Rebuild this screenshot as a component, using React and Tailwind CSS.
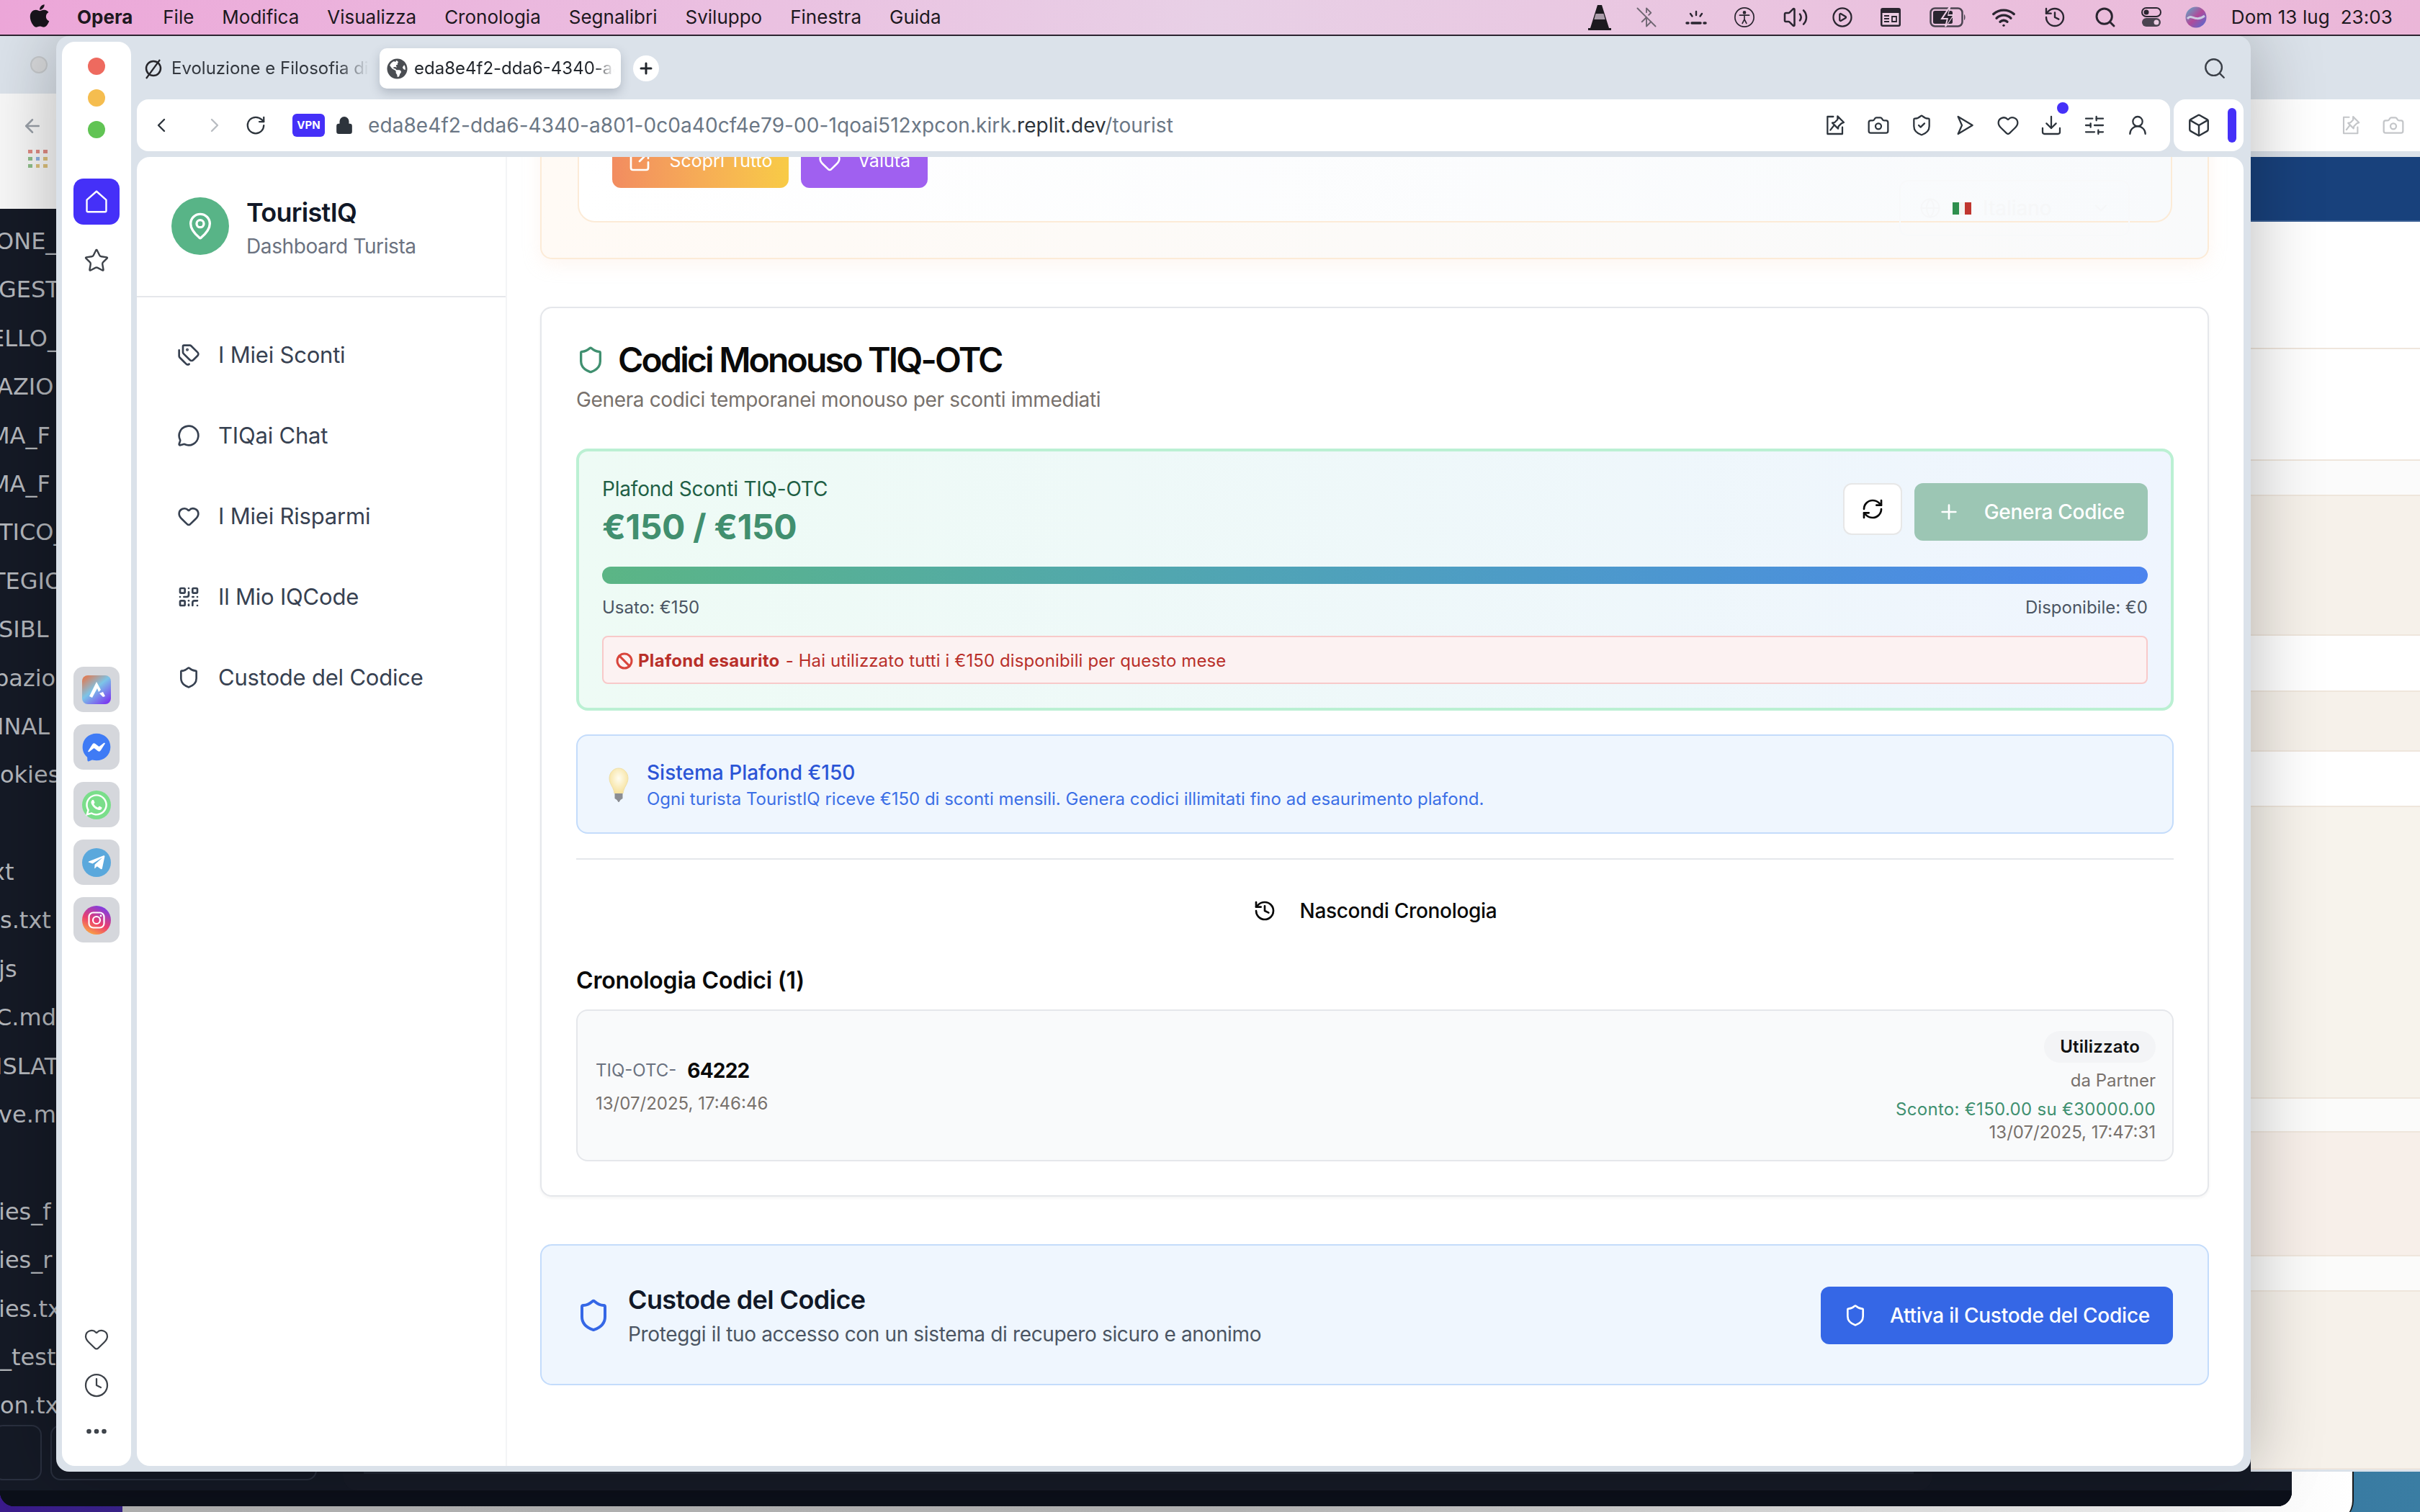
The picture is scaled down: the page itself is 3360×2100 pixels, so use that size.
import React from 'react';
import {
  Tags, MessageCircle, Heart, QrCode, Shield, MapPin, SquareArrowOutUpRight, RefreshCw, Plus, History, Globe,
  ChevronDown, ChevronLeft, ChevronRight, RotateCw, Lock, Search, Camera, ShieldCheck, Download, SlidersHorizontal,
  UserRound, Box, Star, Clock, Ellipsis, ArrowLeft, BluetoothOff, Volume2, CirclePlay, Wifi, Ban,
} from 'lucide-react';
import { FaApple, FaFacebookMessenger, FaWhatsapp, FaTelegramPlane, FaGlobeAmericas } from 'react-icons/fa';

const menuItems = ['File', 'Modifica', 'Visualizza', 'Cronologia', 'Segnalibri', 'Sviluppo', 'Finestra', 'Guida'];

const navItems = [
  { label: 'I Miei Sconti', icon: Tags },
  { label: 'TIQai Chat', icon: MessageCircle },
  { label: 'I Miei Risparmi', icon: Heart },
  { label: 'Il Mio IQCode', icon: QrCode },
  { label: 'Custode del Codice', icon: Shield },
];

// the terminal behind the browser, each row cut by the left edge of the screen
const terminalRows = [
  { t: 'ONE_', c: '-ml-[6px]' },
  { t: 'GEST', c: '-ml-[2px]' },
  { t: 'ELLO_', c: '-ml-[14px]' },
  { t: 'AZIO', c: '-ml-[4px]' },
  { t: 'MA_F', c: '-ml-[14px]' },
  { t: 'MA_F', c: '-ml-[14px]' },
  { t: 'TICO_', c: '-ml-[2px]' },
  { t: 'TEGIO', c: '-ml-[12px]' },
  { t: 'SIBL', c: '-ml-[2px]' },
  { t: 'pazio', c: '-ml-[8px]' },
  { t: 'INAL', c: '-ml-[4px]' },
  { t: 'okies', c: 'ml-0' },
  { t: '\u00a0', c: 'ml-0' },
  { t: 'xt', c: '-ml-[12px]' },
  { t: 's.txt', c: 'ml-0' },
  { t: 'js', c: '-ml-[2px]' },
  { t: 'C.md', c: '-ml-[6px]' },
  { t: 'ISLAT', c: '-ml-[6px]' },
  { t: 've.md', c: '-ml-[2px]' },
  { t: '\u00a0', c: 'ml-0' },
  { t: 'ies_f', c: '-ml-[2px]' },
  { t: 'ies_r', c: '-ml-[2px]' },
  { t: 'ies.tx', c: '-ml-[2px]' },
  { t: '_test', c: 'ml-0' },
  { t: 'on.tx', c: 'ml-0' },
];

const rightStripes = [
  { h: 'h-[177px]', c: 'bg-white' },
  { h: 'h-[155px]', c: 'bg-white' },
  { h: 'h-[49px]', c: 'bg-[#fbfbfb]' },
  { h: 'h-[194px]', c: 'bg-[#f6f1ea]' },
  { h: 'h-[78px]', c: 'bg-white' },
  { h: 'h-[83px]', c: 'bg-[#f6f1ea]' },
  { h: 'h-[77px]', c: 'bg-white' },
  { h: 'h-[405px]', c: 'bg-[#f7f3ec]' },
  { h: 'h-[47px]', c: 'bg-[#fbfbfa]' },
  { h: 'h-[172px]', c: 'bg-[#f7efe9]' },
  { h: 'h-[49px]', c: 'bg-[#fbfbfa]' },
  { h: 'h-[247px]', c: 'bg-[#f6f1ea]' },
];

// toolbar glyphs that are not in the icon packs
const PinBox = ({ className }) => (
  <svg viewBox="0 0 24 24" fill="none" stroke="currentColor" strokeWidth="1.7" strokeLinecap="round" strokeLinejoin="round" className={className}>
    <path d="M10 3H4v18h15.500v-7" />
    <path d="M14.500 2.500l6.500 6.500-2.500 1-3 3-.5 2.500-6-6 2.500-.5 3-3z" />
    <path d="M10.500 12.500L7 17" />
  </svg>
);

const FlowArrow = ({ className }) => (
  <svg viewBox="0 0 24 24" fill="none" stroke="currentColor" strokeWidth="1.7" strokeLinejoin="round" className={className}>
    <path d="M5 3l15 9-15 9 4-9z" />
  </svg>
);

const HomeShape = ({ className }) => (
  <svg viewBox="0 0 24 24" fill="none" stroke="currentColor" strokeWidth="1.500" strokeLinejoin="round" className={className}>
    <path d="M3.500 10.500L12 3l8.500 7.500V20a1 1 0 0 1-1 1h-15a1 1 0 0 1-1-1z" />
  </svg>
);

const Cone = ({ className }) => (
  <svg viewBox="0 0 32 36" className={className}>
    <path d="M13 1h6l10 32h3v3H0v-3h3z" fill="#1c1a1f" />
    <path d="M10.500 13h11l2.200 8H8.300z" fill="#a99aa8" />
  </svg>
);

const Brightness = ({ className }) => (
  <svg viewBox="0 0 32 32" fill="none" stroke="#2a2530" strokeWidth="2.400" strokeLinecap="round" className={className}>
    <path d="M16 8v5M8 11l2.500 3.500M24 11l-2.500 3.500" />
    <path d="M3 24h2M10 24h12M27 24h2" strokeWidth="3.500" />
  </svg>
);

const Accessibility = ({ className }) => (
  <svg viewBox="0 0 32 32" fill="none" stroke="#2a2530" strokeWidth="1.800" strokeLinecap="round" className={className}>
    <circle cx="16" cy="16" r="14" />
    <circle cx="16" cy="9" r="1.600" fill="#2a2530" />
    <path d="M9 13h14M16 13v6M16 19l-3 6M16 19l3 6" />
  </svg>
);

const KeyWindow = ({ className }) => (
  <svg viewBox="0 0 32 32" className={className}>
    <rect x="2" y="3" width="28" height="26" rx="3" fill="#2a2530" />
    <rect x="4.500" y="10" width="23" height="16.500" fill="#eccde3" />
    <path d="M7 14h7M7 18h7M7 22h7M18 15h6v7h-6z" stroke="#2a2530" strokeWidth="1.800" fill="none" />
  </svg>
);

const BatteryBolt = ({ className }) => (
  <svg viewBox="0 0 52 28" className={className}>
    <rect x="1.500" y="1.500" width="44" height="25" rx="6" fill="none" stroke="#4a4350" strokeWidth="2.500" />
    <rect x="5" y="5" width="27" height="18" rx="2.500" fill="#2a2530" />
    <path d="M48 10c2 1 2 7 0 8z" fill="#4a4350" />
    <path d="M27 1L17 16h8l-3 11 11-16h-8l3-10z" fill="#eccde3" stroke="#eccde3" strokeWidth="2" />
    <path d="M27 3l-8 12h7l-2 9 8-12h-7z" fill="#2a2530" />
  </svg>
);

const ControlCenter = ({ className }) => (
  <svg viewBox="0 0 32 32" className={className}>
    <rect x="3" y="3" width="26" height="12" rx="6" fill="none" stroke="#2a2530" strokeWidth="2" />
    <circle cx="9" cy="9" r="3.500" fill="#2a2530" />
    <rect x="3" y="17" width="26" height="12" rx="6" fill="#4a4350" />
    <circle cx="23" cy="23" r="3.500" fill="#eccde3" />
  </svg>
);

const Siri = ({ className }) => (
  <svg viewBox="0 0 32 32" className={className}>
    <defs>
      <linearGradient id="siriA" x1="0" y1="0" x2="1" y2="1">
        <stop offset="0" stopColor="#5ab0c8" />
        <stop offset="0.5" stopColor="#b04a9a" />
        <stop offset="1" stopColor="#4a6fd8" />
      </linearGradient>
    </defs>
    <circle cx="16" cy="16" r="14.500" fill="url(#siriA)" />
    <path d="M4 18c6-8 10 6 24-4" stroke="#d8e8f0" strokeWidth="3" fill="none" opacity="0.8" />
  </svg>
);

const AriaLogo = () => (
  <svg viewBox="0 0 40 40" className="w-[40px] h-[40px]">
    <defs>
      <linearGradient id="ariaBg" x1="0" y1="0" x2="0.8" y2="1">
        <stop offset="0" stopColor="#f0703c" />
        <stop offset="0.5" stopColor="#7cc4e8" />
        <stop offset="1" stopColor="#7a3cf0" />
      </linearGradient>
    </defs>
    <rect width="40" height="40" rx="8" fill="url(#ariaBg)" />
    <path d="M20 9l6 11-3 3-2-5-7 13-4-2z" fill="#fff" />
    <path d="M24 25l5-2 3 6-3 1z" fill="#fff" />
  </svg>
);

const InstagramLogo = () => (
  <svg viewBox="0 0 40 40" className="w-[40px] h-[40px]">
    <defs>
      <linearGradient id="igBg" x1="0.2" y1="1" x2="0.7" y2="0">
        <stop offset="0" stopColor="#fbb040" />
        <stop offset="0.45" stopColor="#ec3f6c" />
        <stop offset="1" stopColor="#7b3ce8" />
      </linearGradient>
    </defs>
    <circle cx="20" cy="20" r="20" fill="url(#igBg)" />
    <rect x="9.500" y="9.500" width="21" height="21" rx="6" fill="none" stroke="#fff" strokeWidth="2.200" />
    <circle cx="20" cy="20" r="5" fill="none" stroke="#fff" strokeWidth="2.200" />
    <circle cx="26" cy="14" r="1.400" fill="#fff" />
  </svg>
);

const Bulb = () => (
  <svg viewBox="0 0 28 48" className="w-[28px] h-[48px]">
    <defs>
      <radialGradient id="bulbFill" cx="0.5" cy="0.4" r="0.7">
        <stop offset="0" stopColor="#fffdf0" />
        <stop offset="1" stopColor="#f5dc8c" />
      </radialGradient>
    </defs>
    <path d="M14 1C6 1 1 8 1 15c0 8 6 12 7 21h12c1-9 7-13 7-21C27 8 22 1 14 1z" fill="url(#bulbFill)" stroke="#efe0a8" />
    <path d="M8.500 36h11v7l-3 2-2 3h-1l-2-3-3-2z" fill="#8b8d92" />
  </svg>
);

const TabSlash = () => (
  <svg viewBox="0 0 30 30" fill="none" stroke="#26262b" className="w-[30px] h-[30px] shrink-0">
    <circle cx="15" cy="15" r="10" strokeWidth="2.500" />
    <path d="M24 3L5 29" strokeWidth="2.200" />
  </svg>
);

const ItalyFlag = () => (
  <span className="flex w-[26px] h-[17px] overflow-hidden">
    <span className="flex-1 bg-[#2f8f4e]" />
    <span className="flex-1 bg-[#f4f4f0]" />
    <span className="flex-1 bg-[#c0362f]" />
  </span>
);

const MenuBar = () => (
  <div className="relative z-20 flex items-center justify-between h-[50px] border-b-2 border-[#2c2430] bg-gradient-to-r from-[#eca6d8] via-[#e8d0e6] to-[#ebb6d8] text-[#1d1820] text-[26px] leading-none">
    <div className="flex items-center">
      <FaApple className="ml-[38px] w-[34px] h-[36px] mb-[4px] text-[#17131a]" />
      <span className="ml-[35px] font-bold">Opera</span>
      <div className="ml-[42px] flex gap-[39px]">
        {menuItems.map((item) => (
          <span key={item}>{item}</span>
        ))}
      </div>
    </div>
    <div className="flex items-center mr-[38px]">
      <Cone className="w-[32px] h-[36px]" />
      <BluetoothOff className="ml-[34px] w-[30px] h-[30px] text-[#6f6672]" strokeWidth={1.5} />
      <Brightness className="ml-[38px] w-[32px] h-[32px]" />
      <Accessibility className="ml-[36px] w-[30px] h-[30px]" />
      <Volume2 className="ml-[38px] w-[36px] h-[36px] text-[#2a2530]" strokeWidth={1.7} />
      <CirclePlay className="ml-[32px] w-[30px] h-[30px] text-[#2a2530]" strokeWidth={1.8} />
      <KeyWindow className="ml-[36px] w-[32px] h-[32px]" />
      <BatteryBolt className="ml-[38px] w-[52px] h-[30px]" />
      <Wifi className="ml-[34px] w-[34px] h-[34px] text-[#2a2530]" strokeWidth={2.4} />
      <History className="ml-[38px] w-[32px] h-[32px] text-[#2a2530]" strokeWidth={1.8} />
      <Search className="ml-[38px] w-[32px] h-[32px] text-[#2a2530]" strokeWidth={2.2} />
      <ControlCenter className="ml-[32px] w-[32px] h-[32px]" />
      <Siri className="ml-[30px] w-[32px] h-[32px]" />
      <span className="ml-[33px] tracking-[0.1px] whitespace-pre">Dom 13 lug  23:03</span>
    </div>
  </div>
);

// everything behind the active browser window
const Backdrop = () => (
  <>
    <div className="absolute left-[170px] top-[2044px] w-[3098px] h-[70px] rounded-br-[30px] border-r-2 border-[#1a1a1a] bg-gradient-to-r from-[#b4b4b4] via-[#b8b8b8] to-[#ffffff]" />
    <div className="absolute left-0 top-[50px] w-[3182px] h-[2042px] rounded-b-[20px] overflow-hidden flex flex-col bg-[#151a26]">
      <div className="h-[80px] bg-[#dbe2ea] flex items-center">
        <span className="ml-[42px] w-[24px] h-[24px] rounded-full border-2 border-[#c6c9cc] bg-[#d8d9db]" />
      </div>
      <div className="h-[160px] bg-[#f7f7f7] flex flex-col">
        <ArrowLeft className="ml-[30px] mt-[30px] w-[30px] h-[30px] text-[#9aa0a8]" strokeWidth={2} />
        <div className="ml-[39px] mt-[18px] grid grid-cols-3 gap-[5px] w-[27px]">
          <span className="h-[5px] bg-[#df8b83]" />
          <span className="h-[5px] bg-[#df8b83]" />
          <span className="h-[5px] bg-[#df8b83]" />
          <span className="h-[5px] bg-[#8fbf8a]" />
          <span className="h-[5px] bg-[#8fb0e0]" />
          <span className="h-[5px] bg-[#dcc07c]" />
          <span className="h-[5px] bg-[#8fbf8a]" />
          <span className="h-[5px] bg-[#dcc07c]" />
          <span className="h-[5px] bg-[#dcc07c]" />
        </div>
      </div>
      <div className="flex-1 flex flex-col pt-[12px] overflow-hidden">
        {terminalRows.map((row, i) => (
          <div key={i} className={`${row.c} h-[67.4px] leading-[67.4px] text-[32px] text-[#b4b7bc] whitespace-nowrap font-['DejaVu_Sans',sans-serif]`}>
            {row.t}
          </div>
        ))}
      </div>
      <div className="h-[22px] bg-[#0c101a]" />
    </div>
    {/* terminal input frames peeking out under the browser */}
    <div className="absolute left-[-10px] top-[1979px] w-[68px] h-[77px] rounded-[14px] border-2 border-[#2a303f]" />
    <div className="absolute left-[70px] top-[1979px] w-[370px] h-[77px] rounded-[14px] border-2 border-[#2a303f]" />
    <div className="absolute left-[476px] top-[2030px] w-[2207px] h-[40px] rounded-b-[20px] bg-[#171b27]" />
    <div className="absolute left-[505px] top-[2030px] w-[2152px] h-[17px] bg-[#232836]" />
    <div className="absolute left-0 top-[2070px] w-[3182px] h-[22px] rounded-b-[20px] bg-[#0c101a]" />

    <div className="absolute left-[3125px] top-[50px] w-[235px] h-[1994px] bg-[#dbe2ea] flex flex-col">
      <div className="h-[88px]" />
      <div className="h-[72px] bg-white flex items-center pl-[124px] gap-[28px] text-[#c4c6c9]">
        <PinBox className="w-[30px] h-[30px]" />
        <Camera className="w-[32px] h-[32px]" strokeWidth={1.7} />
      </div>
      <div className="h-[8px]" />
      <div className="h-[90px] bg-[#18417c] border-b-2 border-[#3a5f94]" />
      {rightStripes.map((s, i) => (
        <div key={i} className={`${s.h} ${s.c} border-b-2 border-[#efe6dc]`} />
      ))}
    </div>
  </>
);

const RailTile = ({ children }) => (
  <div className="w-[64px] h-[63px] rounded-[14px] bg-[#d5d7dc] flex items-center justify-center">{children}</div>
);

const IconRail = () => (
  <div className="w-[96px] my-[8px] ml-[8px] rounded-[18px] bg-white flex flex-col items-center">
    <div className="pt-[22px] flex flex-col gap-[20px]">
      <span className="w-[24px] h-[24px] rounded-full bg-[#ee6a5f]" />
      <span className="w-[24px] h-[24px] rounded-full bg-[#f5bd4f]" />
      <span className="w-[24px] h-[24px] rounded-full bg-[#61c454]" />
    </div>
    <div className="mt-[56px] w-[64px] h-[64px] rounded-[14px] bg-[#4530f8] flex items-center justify-center">
      <HomeShape className="w-[38px] h-[38px] text-white" />
    </div>
    <Star className="mt-[32px] w-[36px] h-[36px] text-[#3d4249]" strokeWidth={1.6} />
    <div className="mt-[546px] flex flex-col gap-[17px]">
      <RailTile><AriaLogo /></RailTile>
      <RailTile>
        <FaFacebookMessenger className="w-[40px] h-[40px] text-[#3f7bf5] bg-[radial-gradient(circle,white_50%,transparent_51%)]" />
      </RailTile>
      <RailTile>
        <span className="w-[40px] h-[40px] rounded-full bg-[#7ade8a] flex items-center justify-center">
          <FaWhatsapp className="w-[34px] h-[34px] text-white" />
        </span>
      </RailTile>
      <RailTile>
        <span className="w-[40px] h-[40px] rounded-full bg-[#5aa8dc] flex items-center justify-center">
          <FaTelegramPlane className="w-[26px] h-[26px] text-white" />
        </span>
      </RailTile>
      <RailTile><InstagramLogo /></RailTile>
    </div>
    <div className="mt-auto pb-[30px] flex flex-col items-center gap-[28px] text-[#3d4249]">
      <Heart className="w-[36px] h-[36px]" strokeWidth={1.5} />
      <Clock className="w-[36px] h-[36px]" strokeWidth={1.5} />
      <Ellipsis className="w-[36px] h-[36px]" strokeWidth={2.4} />
    </div>
  </div>
);

const TabStrip = () => (
  <div className="h-[88px] flex items-center pt-[2px]">
    <div className="w-[337px] flex items-center pl-[8px] gap-[10px] text-[24px] text-[#33383f]">
      <TabSlash />
      <span className="w-[274px] overflow-hidden whitespace-nowrap [mask-image:linear-gradient(to_right,black_85%,transparent)]">
        Evoluzione e Filosofia di
      </span>
    </div>
    <div className="w-[335px] h-[56px] rounded-[10px] bg-white shadow-[0_6px_14px_rgba(60,70,90,0.25)] flex items-center pl-[10px] gap-[9px] text-[24px] text-[#22262c]">
      <FaGlobeAmericas className="w-[29px] h-[29px] shrink-0 text-[#4a4d52]" />
      <span className="w-[278px] overflow-hidden whitespace-nowrap [mask-image:linear-gradient(to_right,black_90%,transparent)]">
        eda8e4f2-dda6-4340-a801-0c0a40cf4e79
      </span>
    </div>
    <div className="ml-[17px] w-[36px] h-[36px] rounded-full bg-white flex items-center justify-center">
      <Plus className="w-[24px] h-[24px] text-[#22262c]" strokeWidth={3} />
    </div>
    <Search className="ml-auto mr-[33px] w-[34px] h-[34px] text-[#3b4048]" strokeWidth={1.7} />
  </div>
);

const AddressBar = () => (
  <div className="h-[72px] flex gap-[5px] pr-[10px]">
    <div className="flex-1 rounded-[16px] bg-white flex items-center text-[#2d343c]">
      <ChevronLeft className="ml-[18px] w-[32px] h-[32px]" strokeWidth={1.8} />
      <ChevronRight className="ml-[42px] w-[32px] h-[32px] text-[#b9bdc2]" strokeWidth={1.8} />
      <RotateCw className="ml-[26px] w-[30px] h-[30px]" strokeWidth={1.8} />
      <span className="ml-[36px] w-[45px] h-[32px] rounded-[6px] bg-[#4530f8] flex items-center justify-center text-[15px] font-bold text-white">VPN</span>
      <Lock className="ml-[14px] w-[26px] h-[26px] fill-[#2d343c]" strokeWidth={2} />
      <span className="ml-[20px] text-[28px] tracking-[0.08px] text-[#6b7785] whitespace-nowrap">
        eda8e4f2-dda6-4340-a801-0c0a40cf4e79-00-1qoai512xpcon.kirk.<span className="text-[#2d343c]">replit.dev</span>/tourist
      </span>
      <div className="ml-auto mr-[29px] flex items-center gap-[28px]">
        <PinBox className="w-[32px] h-[32px]" />
        <Camera className="w-[32px] h-[32px]" strokeWidth={1.7} />
        <ShieldCheck className="w-[32px] h-[32px]" strokeWidth={1.7} />
        <FlowArrow className="w-[32px] h-[32px]" />
        <Heart className="w-[32px] h-[32px]" strokeWidth={1.7} />
        <span className="relative">
          <Download className="w-[32px] h-[32px]" strokeWidth={1.7} />
          <span className="absolute right-[-8px] top-[-16px] w-[16px] h-[16px] rounded-full bg-[#4530f8]" />
        </span>
        <SlidersHorizontal className="w-[32px] h-[32px]" strokeWidth={1.7} />
        <UserRound className="w-[32px] h-[32px]" strokeWidth={1.7} />
      </div>
    </div>
    <div className="w-[97px] rounded-[16px] bg-white flex items-center pl-[18px] text-[#2d343c]">
      <Box className="w-[34px] h-[34px]" strokeWidth={1.7} />
      <span className="ml-[23px] w-[12px] h-[48px] rounded-full bg-[#4530f8]" />
    </div>
  </div>
);

const Sidebar = () => (
  <aside className="w-[514px] shrink-0 border-r-2 border-[#f3f4f6] flex flex-col">
    <div className="h-[195px] border-b-2 border-[#e5e7eb] pl-[48px] pt-[56px] flex gap-[24px]">
      <div className="w-[80px] h-[80px] rounded-full bg-[#58b487] flex items-center justify-center">
        <MapPin className="w-[40px] h-[40px] text-white" strokeWidth={2} />
      </div>
      <div className="flex flex-col">
        <span className="text-[36px] leading-[44px] font-semibold tracking-[-0.7px] text-[#111827] -mt-[1px]">TouristIQ</span>
        <span className="text-[28px] leading-[36px] tracking-[-0.4px] text-[#6b7280] mt-[7px]">Dashboard Turista</span>
      </div>
    </div>
    <nav className="pt-[24px] flex flex-col">
      {navItems.map(({ label, icon: Icon }) => (
        <div key={label} className="h-[112px] pl-[56px] flex items-center gap-[25px] text-[31px] tracking-[-0.2px] text-[#374151]">
          <Icon className="w-[32px] h-[32px]" strokeWidth={2} />
          <span>{label}</span>
        </div>
      ))}
    </nav>
  </aside>
);

const TopCard = () => (
  <div className="relative -mt-[60px] rounded-[16px] border-2 border-[#fcebd7] bg-gradient-to-r from-[#fffaf5] to-[#f9fafb] shadow-[0_8px_24px_rgba(251,220,200,0.25)] pl-[50px] pr-[49px] pb-[49px]">
    <div className="rounded-[24px] border-2 border-[#fcebd7] bg-gradient-to-r from-[#ffffff] to-[#f8fafc] pt-[19px] pl-[46px] pb-[46px] flex gap-[17px] text-[25px] text-white">
      <div className="w-[245px] h-[80px] pt-[5px] rounded-[12px] bg-gradient-to-r from-[#f28c60] to-[#f8cb46] flex items-center justify-center gap-[25px]">
        <SquareArrowOutUpRight className="w-[32px] h-[32px]" strokeWidth={2} />
        <span>Scopri Tutto</span>
      </div>
      <div className="w-[176px] h-[80px] pt-[5px] rounded-[12px] bg-[#a060f0] flex items-center justify-center gap-[23px]">
        <Heart className="w-[32px] h-[32px]" strokeWidth={2} />
        <span>Valuta</span>
      </div>
    </div>
    <div className="absolute left-[1885px] top-[90px] w-[320px] h-[78px] rounded-[12px] border-2 border-[#f8f9fa] flex items-center gap-[16px] pl-[26px] text-[28px] text-[#f6f7f8]">
      <Globe className="w-[30px] h-[30px]" strokeWidth={1.6} />
      <ItalyFlag />
      <span>Italiano</span>
      <ChevronDown className="ml-auto mr-[24px] w-[28px] h-[28px]" />
    </div>
  </div>
);

const OtcCard = () => (
  <section className="rounded-[16px] border-2 border-[#e5e7eb] bg-white shadow-[0_2px_4px_rgba(0,0,0,0.05)] pt-[44px] pl-[48px] pr-[47px] pb-[47px]">
    <div className="flex items-center gap-[18px]">
      <Shield className="w-[40px] h-[40px] text-[#409070]" strokeWidth={2} />
      <h2 className="text-[48px] leading-[56px] font-semibold tracking-[-2.8px] text-[#0a0a0a]">Codici Monouso TIQ-OTC</h2>
    </div>
    <p className="mt-[9px] text-[28px] leading-[36px] tracking-[-0.36px] text-[#78716c]">Genera codici temporanei monouso per sconti immediati</p>

    <div className="mt-[50px] rounded-[16px] border-4 border-[#bbf0d3] bg-gradient-to-r from-[#eefbf5] to-[#eff5fe] px-[32px] pt-[34px] pb-[33px]">
      <div className="flex justify-between items-start">
        <div className="flex flex-col">
          <span className="text-[28px] leading-[36px] tracking-[-0.2px] text-[#1f5f45]">Plafond Sconti TIQ-OTC</span>
          <span className="mt-[7px] text-[48px] leading-[56px] font-bold tracking-[-0.4px] text-[#418f6f]">€150 / €150</span>
        </div>
        <div className="mt-[10px] flex items-start gap-[17px]">
          <div className="w-[82px] h-[72px] rounded-[12px] border-2 border-[#e7e7e7] bg-white flex items-center justify-center">
            <RefreshCw className="w-[32px] h-[32px] text-[#0a0a0a]" strokeWidth={2} />
          </div>
          <div className="h-[80px] rounded-[12px] bg-[#9cc6b4] pl-[32px] pr-[32px] flex items-center gap-[33px] text-[28px] font-medium tracking-[-0.3px] text-white">
            <Plus className="w-[32px] h-[32px]" strokeWidth={2} />
            <span>Genera Codice</span>
          </div>
        </div>
      </div>
      <div className="mt-[27px] h-[24px] rounded-full bg-gradient-to-r from-[#5bb585] to-[#4c84ee]" />
      <div className="mt-[17px] flex justify-between text-[24px] leading-[32px] text-[#4b5563]">
        <span>Usato: €150</span>
        <span>Disponibile: €0</span>
      </div>
      <div className="mt-[23px] h-[67px] pt-[2px] rounded-[8px] border-2 border-[#f8c9c9] bg-[#fcf2f2] pl-[17px] flex items-center text-[24px] tracking-[0.1px] text-[#b9302a]">
        <Ban className="w-[24px] h-[24px] text-[#d9453c] mr-[7px]" strokeWidth={3} />
        <span className="font-bold tracking-[0.3px]">Plafond esaurito</span>
        <span className="ml-[8px]">- Hai utilizzato tutti i €150 disponibili per questo mese</span>
      </div>
    </div>

    <div className="mt-[33px] h-[138px] pt-[2px] rounded-[16px] border-2 border-[#c4dcfb] bg-[#eff6fe] pl-[43px] flex items-center gap-[25px]">
      <Bulb />
      <div className="flex flex-col">
        <span className="text-[28px] leading-[36px] font-medium text-[#2b55d6]">Sistema Plafond €150</span>
        <span className="mt-[3px] text-[24px] leading-[32px] text-[#3b6fe6]">Ogni turista TouristIQ riceve €150 di sconti mensili. Genera codici illimitati fino ad esaurimento plafond.</span>
      </div>
    </div>

    <div className="mt-[34px] border-t-2 border-[#e5e7eb]" />

    <div className="mt-[31px] h-[80px] flex items-center justify-center gap-[33px] text-[28px] font-medium tracking-[-0.3px] text-[#0a0a0a]">
      <History className="w-[32px] h-[32px]" strokeWidth={2} />
      <span>Nascondi Cronologia</span>
    </div>

    <h3 className="mt-[37px] text-[32px] leading-[40px] font-semibold tracking-[-0.2px] text-[#0a0a0a]">Cronologia Codici (1)</h3>

    <div className="mt-[20px] rounded-[16px] border-2 border-[#e5e7eb] bg-[#f9fafb] pl-[25px] pr-[23px] pt-[28px] pb-[22px] flex justify-between">
      <div className="self-center flex flex-col pb-[4px]">
        <div className="flex items-center gap-[15px]">
          <span className="text-[24px] leading-[36px] text-[#6b7280]">TIQ-OTC-</span>
          <span className="text-[28px] leading-[36px] font-bold tracking-[-0.8px] text-[#0a0a0a]">64222</span>
        </div>
        <span className="mt-[12px] text-[24px] leading-[32px] text-[#78716c]">13/07/2025, 17:46:46</span>
      </div>
      <div className="flex flex-col items-end text-[24px] leading-[32px]">
        <span className="h-[44px] px-[22px] rounded-full bg-[#f3f4f6] flex items-center font-semibold tracking-[0.2px] text-[#111]">Utilizzato</span>
        <span className="mt-[9px] text-[#78716c]">da Partner</span>
        <span className="mt-[8px] tracking-[0.3px] text-[#409070]">Sconto: €150.00 su €30000.00</span>
        <span className="text-[#78716c]">13/07/2025, 17:47:31</span>
      </div>
    </div>
  </section>
);

const CustodeCard = () => (
  <section className="h-[196px] pt-[2px] rounded-[16px] border-2 border-[#c4dcfb] bg-[#eff6fe] pl-[48px] pr-[48px] flex items-center justify-between">
    <div className="flex items-center gap-[24px]">
      <Shield className="w-[48px] h-[48px] text-[#3567e6]" strokeWidth={2} />
      <div className="flex flex-col">
        <span className="text-[36px] leading-[44px] font-semibold tracking-[-0.6px] text-[#111827]">Custode del Codice</span>
        <span className="mt-[8px] text-[28px] leading-[36px] tracking-[-0.35px] text-[#4b5563]">Proteggi il tuo accesso con un sistema di recupero sicuro e anonimo</span>
      </div>
    </div>
    <div className="h-[80px] rounded-[12px] bg-[#3567e6] pl-[32px] pr-[32px] flex items-center gap-[32px] text-[28px] font-medium tracking-[-0.25px] text-white">
      <Shield className="w-[32px] h-[32px]" strokeWidth={2} />
      <span>Attiva il Custode del Codice</span>
    </div>
  </section>
);

export default function App() {
  return (
    <div className="relative w-[3360px] h-[2100px] overflow-hidden bg-gradient-to-r from-[#3a1a8a] via-[#2a5a90] to-[#3a7da3] font-[Inter,sans-serif]">
      <MenuBar />
      <Backdrop />

      {/* active browser window */}
      <div className="absolute left-[78px] top-[50px] w-[3047px] h-[1994px] rounded-[18px] bg-[#dbe2ea] shadow-[0_0_100px_rgba(0,0,0,0.28)] flex">
        <IconRail />
        <div className="flex-1 min-w-0 ml-[8px] flex flex-col">
          <TabStrip />
          <AddressBar />
          <main className="mt-[8px] mb-[8px] mr-[10px] flex-1 min-h-0 rounded-[18px] bg-white overflow-hidden flex">
            <Sidebar />
            <div className="flex-1 min-w-0 pl-[46px] pr-[48px] flex flex-col gap-[66px]">
              <TopCard />
              <OtcCard />
              <CustodeCard />
            </div>
          </main>
        </div>
      </div>
    </div>
  );
}
